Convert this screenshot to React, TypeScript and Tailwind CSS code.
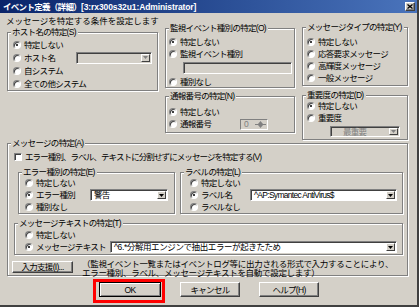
import React from "react";

type Kids = { children?: React.ReactNode };

function Radio({
  label,
  checked,
  className = "",
  labelClass = "",
  h = "h-[12px]",
  children,
}: Kids & { label: React.ReactNode; checked?: boolean; className?: string; labelClass?: string; h?: string }) {
  return (
    <div className={`flex items-center ${h} ${className}`}>
      <span className="relative h-[8px] w-[8px] shrink-0 rounded-full border border-[#808080] border-b-white border-r-white bg-white shadow-[inset_1px_1px_0_#404040]">
        {checked && <span className="absolute left-[2px] top-[2px] h-[2px] w-[2px] rounded-full bg-black" />}
      </span>
      <span className={`ml-[3px] whitespace-nowrap ${labelClass}`}>{label}</span>
      {children}
    </div>
  );
}

function Group({ title, className = "", children }: Kids & { title: string; className?: string }) {
  return (
    <div className={`relative shrink-0 border border-[#808080] shadow-[inset_1px_1px_0_#fff,1px_1px_0_#fff] ${className}`}>
      <span className="absolute left-[3px] top-[-7px] whitespace-nowrap bg-[#d4d0c8] pl-px pr-[2px] leading-[12px]">
        {title}
      </span>
      {children}
    </div>
  );
}

function Arrow({ color = "#000", up }: { color?: string; up?: boolean }) {
  return (
    <svg width="5" height="3" viewBox="0 0 5 3">
      <path d={up ? "M0 3h5L2.5 0z" : "M0 0h5L2.5 3z"} fill={color} />
    </svg>
  );
}

function Combo({
  value = "",
  disabled,
  className = "",
  textClass = "",
  h = "h-[12px]",
}: { value?: string; disabled?: boolean; className?: string; textClass?: string; h?: string }) {
  return (
    <div
      className={`flex shrink-0 border border-[#808080] border-b-white border-r-white p-px shadow-[inset_1px_1px_0_#404040] ${h} ${
        disabled ? "bg-[#d4d0c8]" : "bg-white"
      } ${className}`}
    >
      <span className={`flex-1 whitespace-nowrap pl-[2px] leading-[8px] ${disabled ? "text-[#808080]" : ""} ${textClass}`}>
        {value}
      </span>
      <span className="flex w-[9px] items-center justify-center border border-white border-b-[#404040] border-r-[#404040] bg-[#d4d0c8]">
        <Arrow color={disabled ? "#808080" : "#000"} />
      </span>
    </div>
  );
}

function Spin() {
  return (
    <div className="flex h-[11px] w-[28px] shrink-0 border border-[#808080] border-b-white border-r-white bg-[#d4d0c8] p-px">
      <span className="flex-1 pl-[2px] leading-[7px] text-[#808080]">0</span>
      <span className="flex w-[11px] flex-col">
        <span className="flex flex-1 items-center justify-center border-b border-[#808080]">
          <Arrow color="#808080" up />
        </span>
        <span className="flex flex-1 items-center justify-center">
          <Arrow color="#808080" />
        </span>
      </span>
    </div>
  );
}

function Btn({ children, className = "", def }: Kids & { className?: string; def?: boolean }) {
  return (
    <div
      className={`flex shrink-0 items-center justify-center whitespace-nowrap bg-[#d4d0c8] ${
        def
          ? "border border-black shadow-[inset_1px_1px_0_#fff,inset_-1px_-1px_0_#808080]"
          : "border border-white border-b-[#404040] border-r-[#404040] shadow-[inset_-1px_-1px_0_#808080]"
      } ${className}`}
    >
      {children}
    </div>
  );
}

export default function App() {
  return (
    <div className="flex h-[307px] w-[419px] flex-col overflow-hidden border-b-2 border-r-2 border-[#404040] bg-[#d4d0c8] font-['Liberation_Sans','Noto_Sans_CJK_JP',sans-serif] text-[8.5px] leading-[12px] tracking-[-0.7px] text-black">
      {/* title bar */}
      <div className="flex h-[13px] shrink-0 items-center bg-linear-to-r from-[#0a246a] to-[#4a74bc] pl-[3px] pr-[2px] font-bold text-white">
        <span className="whitespace-nowrap">
          イベント定義（詳細）<span className="tracking-[-0.1px]">[3:rx300s32u1:Administrator]</span>
        </span>
        <Btn className="ml-auto h-[9px] w-[10px]">
          <svg width="6" height="5" viewBox="0 0 6 5">
            <path d="M0.5 0.5l5 4M5.5 0.5l-5 4" stroke="#000" strokeWidth="1.3" />
          </svg>
        </Btn>
      </div>

      <div className="flex flex-col pl-[7px] pr-[9px]">
        <div className="-ml-px mt-[3px] h-[11px] whitespace-nowrap leading-[11px] tracking-[0px]">
          メッセージを特定する条件を設定します
        </div>

        {/* upper groups */}
        <div className="flex items-start">
          <Group title="ホスト名の特定(S)" className="mt-[5px] h-[59px] w-[151px] pl-[5px] pr-[5px] pt-[5px]">
            <Radio checked label="特定しない" h="h-[13px]" />
            <Radio label="ホスト名" h="h-[13px]">
              <Combo disabled className="ml-auto w-[76px]" />
            </Radio>
            <Radio label="自システム" h="h-[13px]" />
            <Radio label="全ての他システム" h="h-[13px]" />
          </Group>

          <div className="ml-[7px] flex w-[130px] shrink-0 flex-col">
            <Group title="監視イベント種別の特定(O)" className="mt-px h-[60px] pl-[3px] pt-[7px]">
              <Radio checked label="特定しない" />
              <Radio label="監視イベント種別" />
              <div className="ml-[14px] mt-[2px] h-[12px] w-[109px] border border-[#808080] border-b-white border-r-white bg-[#d4d0c8] shadow-[inset_1px_1px_0_#404040]" />
              <Radio label="種別なし" className="mt-[2px]" />
            </Group>
            <Group title="通報番号の特定(N)" className="mt-[8px] h-[37px] pl-[3px] pt-[9px]">
              <Radio checked label="特定しない" />
              <Radio label="通報番号" labelClass="w-[60px]">
                <Spin />
              </Radio>
            </Group>
          </div>

          <div className="ml-[7px] flex w-[106px] shrink-0 flex-col">
            <Group title="メッセージタイプの特定(Y)" className="h-[59px] pl-[4px] pt-[8px]">
              <Radio checked label="特定しない" />
              <Radio label="応答要求メッセージ" />
              <Radio label="高輝度メッセージ" />
              <Radio label="一般メッセージ" />
            </Group>
            <Group title="重要度の特定(D)" className="mt-[9px] h-[45px] pl-[4px] pt-[4px]">
              <Radio checked label="特定しない" />
              <Radio label="重要度" />
              <Combo disabled value="最重要" h="h-[11px]" textClass="pl-[11px] leading-[7px]" className="ml-[23px] mt-[2px] w-[70px]" />
            </Group>
          </div>
        </div>

        {/* message group */}
        <Group title="メッセージの特定(A)" className="mt-[3px] h-[133px] pt-[7px]">
          <div className="flex h-[12px] items-center pl-[6px]">
            <span className="h-[8px] w-[8px] shrink-0 border border-[#808080] border-b-white border-r-white bg-white shadow-[inset_1px_1px_0_#404040]" />
            <span className="ml-[3px] whitespace-nowrap tracking-[-0.9px]">
              エラー種別、ラベル、テキストに分割せずにメッセージを特定する(V)
            </span>
          </div>

          <div className="mt-[9px] flex">
            <Group title="エラー種別の特定(E)" className="ml-[10px] h-[42px] w-[157px] pl-[6px] pt-[4px]">
              <Radio label="特定しない" />
              <Radio checked label="エラー種別" labelClass="w-[54px]">
                <Combo value="警告" className="w-[78px]" />
              </Radio>
              <Radio label="種別なし" />
            </Group>
            <Group title="ラベルの特定(L)" className="ml-[5px] h-[42px] w-[223px] pl-[9px] pt-[4px]">
              <Radio label="特定しない" />
              <Radio checked label="ラベル名" labelClass="w-[49px]">
                <Combo value="^AP:Symantec AntiVirus$" className="w-[147px]" />
              </Radio>
              <Radio label="ラベルなし" />
            </Group>
          </div>

          <Group title="メッセージテキストの特定(T)" className="ml-[6px] mt-[9px] h-[32px] w-[389px] pl-[10px] pt-[5px]">
            <Radio label="特定しない" />
            <Radio checked label="メッセージテキスト" labelClass="w-[74px]">
              <Combo value="^6.*分解用エンジンで抽出エラーが起きたため" textClass="tracking-[-0.4px]" className="w-[287px]" />
            </Radio>
          </Group>

          <div className="mt-[6px] flex items-start">
            <Btn className="ml-[4px] h-[12px] w-[61px]">入力支援(I)...</Btn>
            <div className="ml-[9px] mt-[-1px] whitespace-nowrap leading-[8.5px] tracking-[-0.3px]">
              （監視イベント一覧またはイベントログ等に出力される形式で入力することにより、
              <br />
              エラー種別、ラベル、メッセージテキストを自動で設定します）
            </div>
          </div>
        </Group>

        {/* dialog buttons */}
        <div className="mt-[3px] flex items-start">
          <div className="ml-[86px] h-[24px] w-[72px] shrink-0 border-[3px] border-[#ff0000] pl-[3px]">
            <Btn def className="h-[15px] w-[62px]">
              OK
            </Btn>
          </div>
          <Btn className="ml-[15px] mt-[3px] h-[15px] w-[60px]">キャンセル</Btn>
          <Btn className="ml-[19px] mt-[3px] h-[15px] w-[60px]">ヘルプ(H)</Btn>
        </div>
      </div>
    </div>
  );
}
